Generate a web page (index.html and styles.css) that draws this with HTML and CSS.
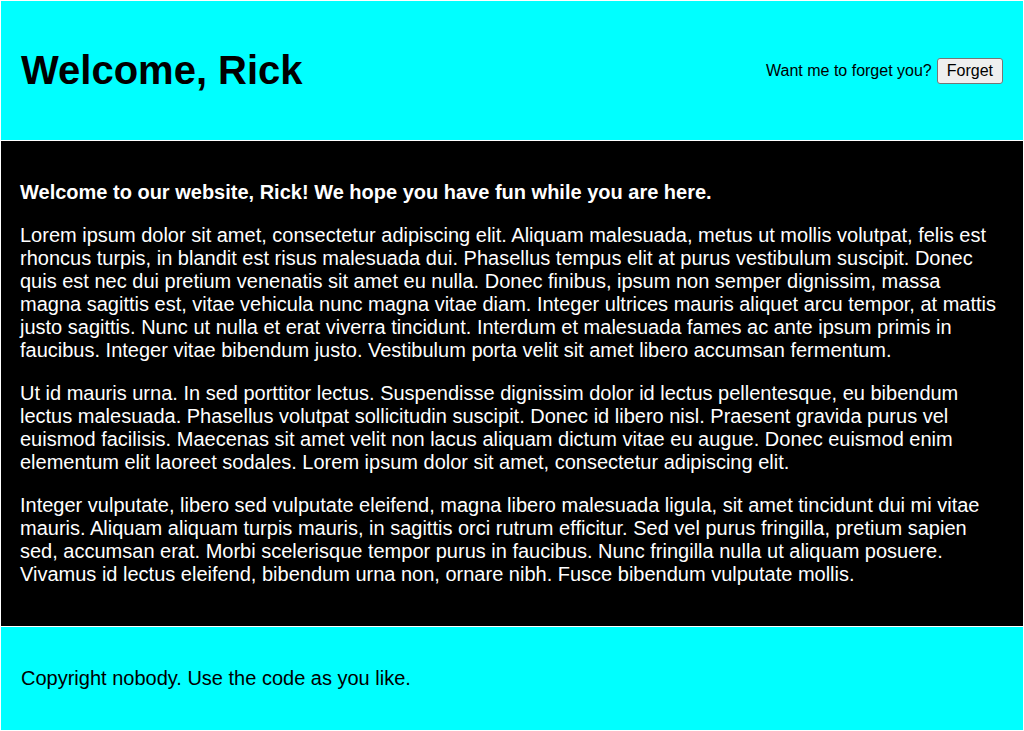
FILE: index.html
```html
<!DOCTYPE html>
<html lang="en">
<head>
<meta charset="utf-8">
<title>Welcome</title>
<link rel="stylesheet" href="styles.css">
</head>
<body>
<div class="page">
  <header class="site-header">
    <h1 class="title">Welcome, Rick</h1>
    <div class="forget">
      <span>Want me to forget you?</span>
      <button class="forget-btn" type="button">Forget</button>
    </div>
  </header>
  <main class="content">
    <p class="lead">Welcome to our website, Rick! We hope you have fun while you are here.</p>
    <p>Lorem ipsum dolor sit amet, consectetur adipiscing elit. Aliquam malesuada, metus ut mollis volutpat, felis est rhoncus turpis, in blandit est risus malesuada dui. Phasellus tempus elit at purus vestibulum suscipit. Donec quis est nec dui pretium venenatis sit amet eu nulla. Donec finibus, ipsum non semper dignissim, massa magna sagittis est, vitae vehicula nunc magna vitae diam. Integer ultrices mauris aliquet arcu tempor, at mattis justo sagittis. Nunc ut nulla et erat viverra tincidunt. Interdum et malesuada fames ac ante ipsum primis in faucibus. Integer vitae bibendum justo. Vestibulum porta velit sit amet libero accumsan fermentum.</p>
    <p>Ut id mauris urna. In sed porttitor lectus. Suspendisse dignissim dolor id lectus pellentesque, eu bibendum lectus malesuada. Phasellus volutpat sollicitudin suscipit. Donec id libero nisl. Praesent gravida purus vel euismod facilisis. Maecenas sit amet velit non lacus aliquam dictum vitae eu augue. Donec euismod enim elementum elit laoreet sodales. Lorem ipsum dolor sit amet, consectetur adipiscing elit.</p>
    <p>Integer vulputate, libero sed vulputate eleifend, magna libero malesuada ligula, sit amet tincidunt dui mi vitae mauris. Aliquam aliquam turpis mauris, in sagittis orci rutrum efficitur. Sed vel purus fringilla, pretium sapien sed, accumsan erat. Morbi scelerisque tempor purus in faucibus. Nunc fringilla nulla ut aliquam posuere. Vivamus id lectus eleifend, bibendum urna non, ornare nibh. Fusce bibendum vulputate mollis.</p>
  </main>
  <footer class="site-footer">
    <p>Copyright nobody. Use the code as you like.</p>
  </footer>
</div>
</body>
</html>
```
FILE: styles.css
```css
html, body {
  margin: 0;
  padding: 0;
  background: #ffffff;
}

body {
  font-family: "Liberation Sans", Arial, sans-serif;
  font-size: 20px;
}

.page {
  display: flex;
  flex-direction: column;
  gap: 1px;
  padding: 1px;
  height: 100vh;
  box-sizing: border-box;
}

.site-header {
  background: #00ffff;
  color: #000;
  display: flex;
  justify-content: space-between;
  align-items: center;
  padding: 0 20px;
  height: 139px;
  box-sizing: border-box;
  flex-shrink: 0;
}

.title {
  font-size: 40px;
  font-weight: bold;
  margin: 0;
}

.forget {
  font-size: 16px;
  display: flex;
  align-items: center;
  gap: 5px;
}

.forget-btn {
  font-family: "Liberation Sans", Arial, sans-serif;
  font-size: 16px;
  color: #000;
  background: #efefef;
  border: 1px solid #767676;
  border-radius: 3px;
  padding: 3px 9px;
  line-height: 18px;
}

.content {
  background: #000;
  color: #fff;
  padding: 20px 20px 20px 19px;
  flex-shrink: 0;
}

.content p {
  margin: 20px 0;
}

.lead {
  font-weight: bold;
}

.site-footer {
  background: #00ffff;
  color: #000;
  padding: 0 20px;
  flex: 1;
  display: flex;
  align-items: center;
}

.site-footer p {
  margin: 0;
}
```
